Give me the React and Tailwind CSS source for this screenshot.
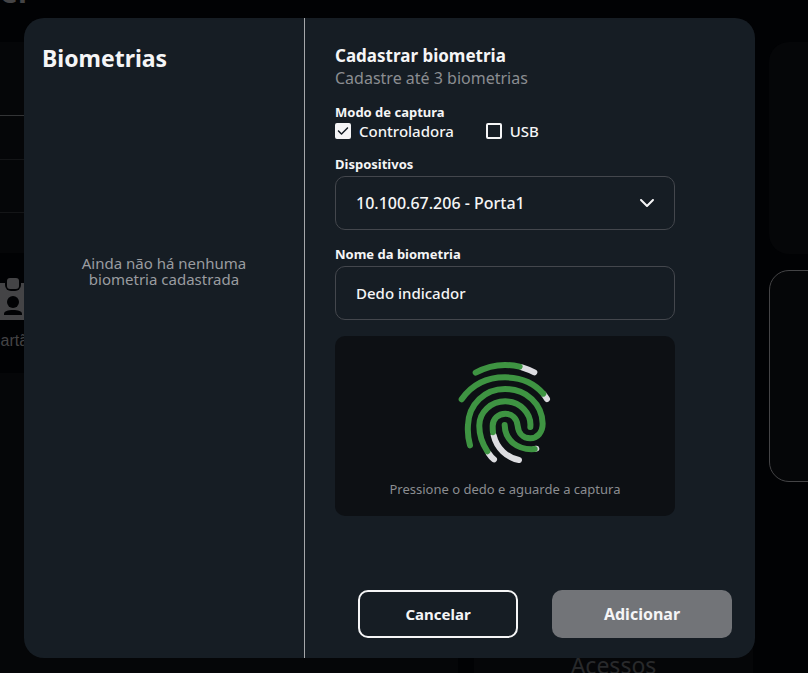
import React, { useState } from "react";
import { FaCheck, FaChevronDown } from "react-icons/fa6";

function BadgeIcon() {
  return (
    <svg viewBox="0 0 48 48" className="h-12 w-12" aria-hidden="true">
      <path d="M0 8h48v37H0z" fill="#444446" />
      <path d="M29 8v2a6 6 0 0 0 6 6h4a6 6 0 0 0 6-6V8z" fill="#010204" />
      <rect x="31" y="3" width="12" height="11" rx="3" fill="#444446" />
      <circle cx="37" cy="27" r="6" fill="#010204" />
      <path d="M28 40v-1c0-3 4-4 9-4s9 1 9 4v1z" fill="#010204" />
    </svg>
  );
}

function Fingerprint() {
  return (
    <svg viewBox="54 48 282 306" className="h-[102px] w-[94px]" fill="none" strokeWidth="18" strokeLinecap="round" aria-hidden="true">
      <g stroke="#dcdce0">
        <path d="M246 67Q268 74 283 82" />
        <path d="M312 149L321 162" />
        <path d="M161 271C170 309 200 338 237 345" />
        <path d="M146 325Q153 336 162 343" />
        <path d="M284 312L289 311" />
      </g>
      <g stroke="#3e9442">
        <path d="M107 83Q150 60 195 60Q218 60 239 65" />
        <path d="M65 163C95 120 140 97 195 97C241 97 283 115 310 146" />
        <path d="M90 301C84 278 82 262 84 240C86 177 135 132 195 132C260 132 307 178 308 236C308 262 292 280 271 280C249 280 235 264 233 242C231 220 215 206 196 206C175 206 158 222 158 243Q158 254 159 262" />
        <path d="M271 246C275 205 240 169 196 169C152 169 119 202 118 240C117 272 126 295 142 319" />
        <path d="M194 240C195 286 232 316 284 312" />
      </g>
    </svg>
  );
}

function Option({ label, checked, onChange }) {
  return (
    <label className="flex h-[22px] cursor-pointer items-center gap-2 text-[15px] font-medium">
      <span className="relative flex h-4 w-4">
        <input
          type="checkbox"
          checked={checked}
          onChange={onChange}
          className="h-4 w-4 appearance-none rounded-xs border-2 border-[#f5f5f6] checked:bg-[#f5f5f6]"
        />
        {checked && <FaCheck className="pointer-events-none absolute inset-0 m-auto h-3 w-3 text-[#161d24]" />}
      </span>
      {label}
    </label>
  );
}

function Background() {
  return (
    <div className="flex h-screen gap-4 overflow-hidden text-[#444446]" aria-hidden="true">
      <div className="flex flex-1 flex-col">
        <h1 className="-mt-7 h-[70px] text-3xl leading-10 font-bold">er</h1>
        <div className="flex h-[211px] flex-col bg-[#050608]">
          <div className="h-[74px] border-b border-[#333436]" />
          <div className="h-11 border-b border-[#141517]" />
          <div className="h-[53px] border-b border-[#141517]" />
        </div>
        <div className="mt-[22px] -ml-6 flex h-[98px] flex-col gap-2">
          <BadgeIcon />
          <span className="pl-[13px] font-[Liberation_Sans] text-base leading-5">Cartão</span>
        </div>
        <div className="flex-1 bg-[#050608]" />
      </div>
      <div className="flex w-[279px] flex-col justify-end pt-[42px]">
        <div className="flex flex-1 flex-col justify-end bg-[#050608]">
          <h2 className="-mb-2 text-center text-[23px] leading-8 text-[#28292b]">Acessos</h2>
        </div>
      </div>
      <div className="flex w-[39px] flex-col gap-4 overflow-hidden pt-[42px]">
        <div className="h-[212px] w-60 rounded-[20px] bg-[#050608]" />
        <div className="h-[212px] w-60 rounded-[20px] border border-[#444446] bg-[#050608]" />
      </div>
    </div>
  );
}

export default function App() {
  const [mode, setMode] = useState("controladora");
  const [device, setDevice] = useState("porta1");
  const [name, setName] = useState("Dedo indicador");

  return (
    <div className="relative min-h-screen bg-[#010204] font-[Noto_Sans,sans-serif] text-[#f5f5f6]">
      <Background />
      <div className="absolute inset-x-0 top-0 pt-[18px] pr-[53px] pb-[15px] pl-6">
        <div role="dialog" aria-labelledby="dialog-title" className="flex overflow-hidden rounded-[20px] bg-[#161d24]">
          <section className="w-[281px] border-r border-[#a5a7aa] px-[18px] pt-6">
            <h2 id="dialog-title" className="text-[23px] leading-8 font-bold">
              Biometrias
            </h2>
            <p className="mt-[181px] text-center text-[15px] leading-4 text-[#9a9ca0]">
              Ainda não há nenhuma
              <br />
              biometria cadastrada
            </p>
          </section>

          <form className="flex flex-1 flex-col pt-[26px] pb-5 pl-[30px]" onSubmit={(e) => e.preventDefault()}>
            <h3 className="text-[17px] leading-6 font-bold">Cadastrar biometria</h3>
            <p className="text-base leading-5 text-[#8b8d91]">Cadastre até 3 biometrias</p>

            <fieldset className="mt-4">
              <legend className="text-[13px] leading-4 font-bold">Modo de captura</legend>
              <div className="flex gap-8">
                <Option label="Controladora" checked={mode === "controladora"} onChange={() => setMode("controladora")} />
                <Option label="USB" checked={mode === "usb"} onChange={() => setMode("usb")} />
              </div>
            </fieldset>

            <div className="mt-[10px] flex max-w-[340px] flex-col">
              <label htmlFor="device" className="text-[13px] leading-6 font-bold">
                Dispositivos
              </label>
              <div className="relative">
                <select
                  id="device"
                  value={device}
                  onChange={(e) => setDevice(e.target.value)}
                  className="h-[54px] w-full appearance-none rounded-[10px] border border-[#44474d] bg-transparent px-5 text-base font-medium"
                >
                  <option value="porta1">10.100.67.206 - Porta1</option>
                </select>
                <FaChevronDown className="pointer-events-none absolute top-[18px] right-5 h-4 w-4" />
              </div>

              <label htmlFor="name" className="mt-3 text-[13px] leading-6 font-bold">
                Nome da biometria
              </label>
              <input
                id="name"
                type="text"
                value={name}
                onChange={(e) => setName(e.target.value)}
                className="h-[54px] w-full rounded-[10px] border border-[#44474d] bg-transparent px-5 text-[15px] font-medium"
              />

              <div className="mt-4 flex h-[180px] flex-col items-center rounded-[10px] bg-[#0d1014] pt-[25px]">
                <Fingerprint />
                <p className="mt-4 text-[13px] leading-5 text-[#8b8d91]">Pressione o dedo e aguarde a captura</p>
              </div>
            </div>

            <div className="mt-[74px] flex justify-end gap-[34px] pr-[23px]">
              <button type="button" className="h-12 w-40 rounded-[10px] border-2 border-[#f5f5f6] text-[15px] font-bold">
                Cancelar
              </button>
              <button type="submit" className="h-12 w-[180px] rounded-[10px] bg-[#727478] text-base font-bold">
                Adicionar
              </button>
            </div>
          </form>
        </div>
      </div>
    </div>
  );
}
